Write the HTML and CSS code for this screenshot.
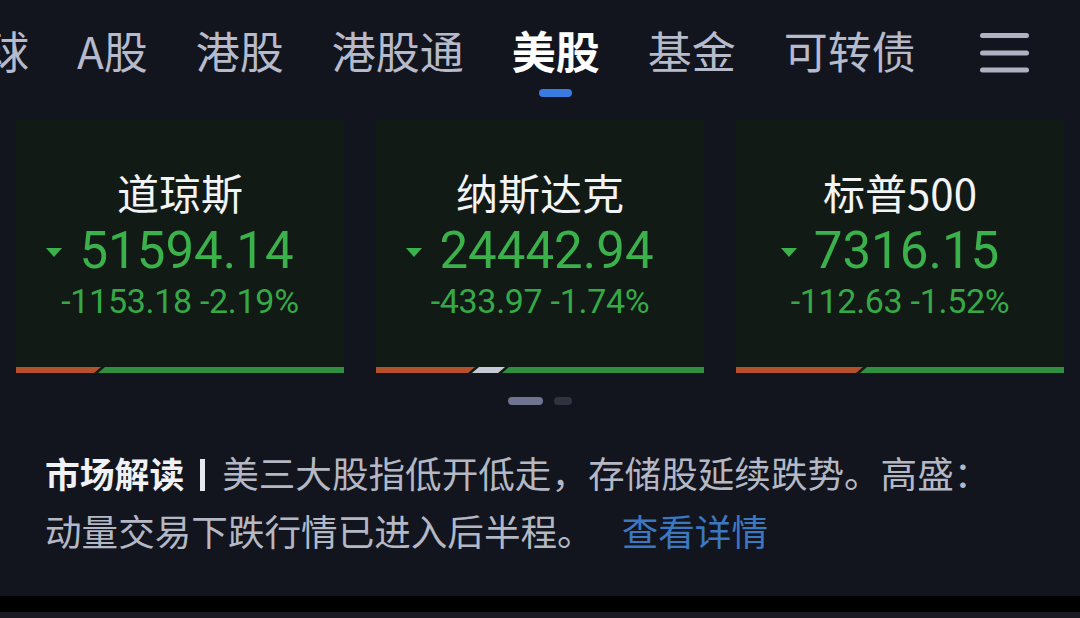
FILE: index.html
```html
<!DOCTYPE html>
<html lang="zh-CN">
<head>
<meta charset="utf-8">
<title>美股行情</title>
<link rel="stylesheet" href="styles.css">
</head>
<body>
<div class="screen">
  <nav class="tabs">
    <div class="tab-list">
      <span class="tab">全球</span>
      <span class="tab">A股</span>
      <span class="tab">港股</span>
      <span class="tab">港股通</span>
      <span class="tab tab-active">美股</span>
      <span class="tab">基金</span>
      <span class="tab">可转债</span>
    </div>
    <button class="menu" aria-label="更多">
      <svg width="49" height="40" viewBox="0 0 49 40">
        <g stroke="#aeb2c3" stroke-width="5" stroke-linecap="round">
          <line x1="2.5" y1="2.5" x2="46.5" y2="2.5"/>
          <line x1="2.5" y1="20" x2="46.5" y2="20"/>
          <line x1="2.5" y1="37" x2="46.5" y2="37"/>
        </g>
      </svg>
    </button>
  </nav>

  <section class="cards">
    <div class="card">
      <div class="card-name">道琼斯</div>
      <div class="card-value"><span class="arrow-down"></span><span>51594.14</span></div>
      <div class="card-change">-1153.18 -2.19%</div>
      <div class="breadth">
        <span class="seg seg-up seg-first" style="width:85px"></span>
        <span class="seg seg-down seg-last"></span>
      </div>
    </div>
    <div class="card">
      <div class="card-name">纳斯达克</div>
      <div class="card-value"><span class="arrow-down"></span><span>24442.94</span></div>
      <div class="card-change">-433.97 -1.74%</div>
      <div class="breadth">
        <span class="seg seg-up seg-first" style="width:99px"></span>
        <span class="seg seg-flat seg-mid" style="width:33px"></span>
        <span class="seg seg-down seg-last"></span>
      </div>
    </div>
    <div class="card">
      <div class="card-name">标普500</div>
      <div class="card-value"><span class="arrow-down"></span><span>7316.15</span></div>
      <div class="card-change">-112.63 -1.52%</div>
      <div class="breadth">
        <span class="seg seg-up seg-first" style="width:127px"></span>
        <span class="seg seg-down seg-last"></span>
      </div>
    </div>
  </section>

  <div class="pager">
    <span class="dot dot-active"></span>
    <span class="dot"></span>
  </div>

  <p class="insight">
    <strong class="insight-label">市场解读</strong><span class="divider"></span>美三大股指低开低走，存储股延续跌势。高盛：动量交易下跌行情已进入后半程。<a class="more" href="#">查看详情</a>
  </p>

  <div class="bottom-bar"></div>
</div>
</body>
</html>
```

FILE: styles.css
```css
* {
  box-sizing: border-box;
}

html, body {
  margin: 0;
  padding: 0;
  background: #12151d;
}

.screen {
  width: 1080px;
  height: 618px;
  overflow: hidden;
  display: flex;
  flex-direction: column;
  background: #12151d;
  font-family: "Noto Sans CJK SC", "Noto Sans", sans-serif;
}

/* ---------- top tab bar ---------- */
.tabs {
  display: flex;
  align-items: flex-start;
  padding-top: 28px;
}

.tab-list {
  flex: 1;
  display: flex;
  align-items: flex-start;
  gap: 48px;
  margin-left: -59px;
  overflow: hidden;
  white-space: nowrap;
}

.tab {
  display: flex;
  flex-direction: column;
  align-items: center;
  font-size: 44px;
  line-height: 44px;
  color: #b6bacb;
}

.tab-active {
  color: #ffffff;
  font-weight: 700;
}

.tab-active::after {
  content: "";
  display: block;
  width: 33px;
  height: 8px;
  margin-top: 17px;
  border-radius: 4px;
  background: #3a7be2;
}

.menu {
  flex: none;
  margin: 5px 51px 0 0;
  padding: 0;
  border: 0;
  background: none;
  width: 49px;
  height: 40px;
  display: block;
}

.menu svg {
  display: block;
}

/* ---------- index cards ---------- */
.cards {
  display: flex;
  gap: 32px;
  padding: 0 16px;
  margin-top: 23px;
}

.card {
  width: 328px;
  height: 254px;
  display: flex;
  flex-direction: column;
  align-items: center;
  padding-top: 51px;
  background: #121a16;
}

.card-name {
  font-size: 42px;
  line-height: 42px;
  height: 42px;
  color: #f3f4f6;
  font-family: "Noto Sans CJK SC", "Roboto", sans-serif;
}

.card-value {
  display: flex;
  align-items: center;
  margin-top: 12px;
  padding-right: 20px;
  height: 51px;
  font-family: "Roboto", "Noto Sans", sans-serif;
  font-size: 51px;
  line-height: 51px;
  color: #3bb14b;
}

.arrow-down {
  width: 0;
  height: 0;
  margin: 4px 17px 0 0;
  border-left: 8px solid transparent;
  border-right: 8px solid transparent;
  border-top: 9px solid #3bb14b;
}

.card-change {
  margin-top: 8px;
  height: 34px;
  font-family: "Roboto", "Noto Sans", sans-serif;
  font-size: 34px;
  line-height: 34px;
  letter-spacing: -0.3px;
  color: #36a947;
}

/* advance / flat / decline breadth bar */
.breadth {
  align-self: stretch;
  margin-top: auto;
  margin-bottom: 1px;
  display: flex;
  height: 6px;
}

.seg {
  display: block;
  height: 6px;
  flex: none;
}

.seg + .seg {
  margin-left: -3px;
}

.seg-up {
  background: #b4512b;
}

.seg-flat {
  background: #c6cad4;
}

.seg-down {
  background: #2f8e3f;
}

.seg-first {
  clip-path: polygon(0 0, 100% 0, calc(100% - 7px) 100%, 0 100%);
}

.seg-mid {
  clip-path: polygon(7px 0, 100% 0, calc(100% - 7px) 100%, 0 100%);
}

.seg-last {
  flex: 1;
  clip-path: polygon(7px 0, 100% 0, 100% 100%, 0 100%);
}

/* ---------- carousel pager ---------- */
.pager {
  display: flex;
  justify-content: center;
  gap: 11px;
  margin-top: 23px;
}

.dot {
  width: 18px;
  height: 8px;
  border-radius: 4px;
  background: #2f333f;
}

.dot-active {
  width: 35px;
  background: #6f7590;
}

/* ---------- market commentary ---------- */
.insight {
  margin: 39px 0 0;
  padding: 0 70px 0 45px;
  font-size: 36.6px;
  line-height: 57px;
  color: #b4b8c5;
}

.insight-label {
  color: #eff1f5;
  font-weight: 700;
  font-size: 34.8px;
}

.divider {
  display: inline-block;
  width: 5px;
  height: 32px;
  margin: 0 17px 0 16px;
  vertical-align: -3px;
  background: #e6e8ee;
}

.more {
  margin-left: 28px;
  color: #3c78c2;
  text-decoration: none;
}

/* ---------- bottom edge ---------- */
.bottom-bar {
  margin-top: auto;
  height: 22px;
  flex: none;
  background: #000000;
  border-bottom: 6px solid #1a1c21;
}
```
